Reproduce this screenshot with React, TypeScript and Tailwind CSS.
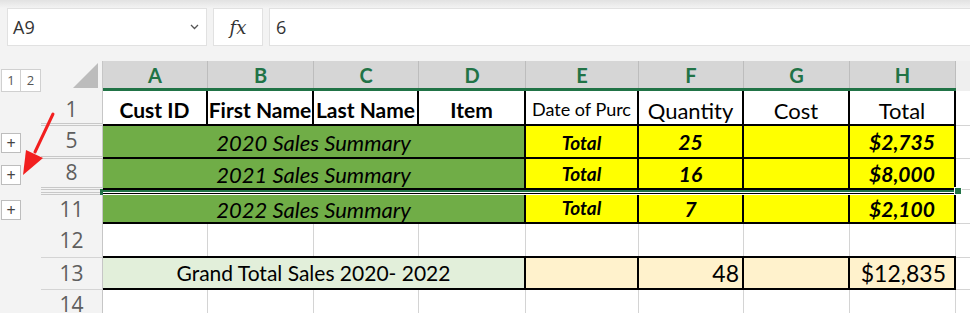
import React from 'react'

const cols = [
  { key: 'A', w: 'w-[105px]' },
  { key: 'B', w: 'w-[106px]' },
  { key: 'C', w: 'w-[105px]' },
  { key: 'D', w: 'w-[107px]' },
  { key: 'E', w: 'w-[113px]' },
  { key: 'F', w: 'w-[105px]' },
  { key: 'G', w: 'w-[106px]' },
  { key: 'H', w: 'w-[106px]' },
]

const cellFont = "font-['Lato','Liberation_Sans',sans-serif]"

function PlusBox() {
  return (
    <div className="w-[20px] h-[20px] bg-white border border-[#bdbdbd] flex items-center justify-center text-[16px] leading-none text-[#444]">
      +
    </div>
  )
}

// left outline gutter + row number
function RowHead({ num, h, plus, double, line = true, pt = '' }: { num?: string; h: string; plus?: boolean; double?: boolean; line?: boolean; pt?: string }) {
  return (
    <div className={`flex ${h} shrink-0`}>
      <div className="w-[41px] flex items-center pl-[1px]">{plus && <PlusBox />}</div>
      <div
        className={`w-[62px] flex items-center justify-center border-r border-[#c6c6c6] text-[21px] text-[#5e5e5e] font-['Open_Sans',sans-serif] ${pt} ${
          line ? (double ? 'border-b-[3px] border-double border-b-[#c8c8c8]' : 'border-b border-b-[#d4d4d4]') : ''
        }`}
      >
        {num}
      </div>
    </div>
  )
}

function SummaryRow({ h, num, year, qty, total }: { h: string; num: string; year: string; qty: string; total: string }) {
  return (
    <div className={`flex ${h} shrink-0`}>
      <RowHead num={num} h={h} plus double={num !== '11'} line={num !== '11'} />
      <div className={`flex ${cellFont} border-b-2 border-black`}>
        <div className="w-[423px] bg-[#70ad47] border-r-2 border-black flex items-center justify-center italic text-[22px] text-black pt-[1px]">
          {year} Sales Summary
        </div>
        <div className="w-[113px] bg-[#ffff00] border-r-2 border-black flex items-end justify-center pb-[0px] italic font-bold text-[19px]">
          Total
        </div>
        <div className="w-[105px] bg-[#ffff00] border-r-2 border-black flex items-center justify-center italic font-bold text-[21px]">
          {qty}
        </div>
        <div className="w-[106px] bg-[#ffff00] border-r-2 border-black" />
        <div className="w-[106px] bg-[#ffff00] border-r-2 border-black flex items-center justify-center italic font-bold text-[21px]">
          {total}
        </div>
      </div>
      <div className="flex-1 bg-white border-b border-[#d4d4d4]" />
    </div>
  )
}

function BlankRow({ h, num, bottom }: { h: string; num: string; bottom?: boolean }) {
  return (
    <div className={`flex ${h} shrink-0`}>
      <RowHead num={num} h={h} />
      <div className={`flex ${bottom ? 'border-b-2 border-black' : ''}`}>
        {cols.map((c) => (
          <div key={c.key} className={`${c.w} bg-white border-r border-[#d4d4d4]`} />
        ))}
      </div>
      <div className="flex-1 bg-white border-b border-[#d4d4d4]" />
    </div>
  )
}

export default function App() {
  return (
    <div className="relative w-[970px] h-[313px] overflow-hidden bg-[#f3f3f3] flex flex-col">
      {/* Formula bar */}
      <div className="h-[8px] shrink-0 bg-gradient-to-b from-[#e2e2e2] to-[#f3f3f3]" />
      <div className="flex h-[38px] shrink-0 pl-[7px] gap-[6px]">
        <div className="w-[200px] bg-white border border-[#e1e1e1] flex items-center justify-between pl-[5px] pr-[7px] font-['Open_Sans',sans-serif] text-[18px] text-[#333]">
          <span>A9</span>
          <svg width="9" height="6" viewBox="0 0 9 6" fill="none" stroke="#555" strokeWidth="1.3">
            <path d="M1 1l3.5 3.5L8 1" />
          </svg>
        </div>
        <div className="w-[50px] bg-white border border-[#e1e1e1] flex items-center justify-center font-['DejaVu_Serif','Liberation_Serif',serif] italic text-[18px] text-[#333]">
          fx
        </div>
        <div className="flex-1 bg-white border-y border-l border-[#e1e1e1] flex items-center pl-[6px] font-['Open_Sans',sans-serif] text-[18px] text-[#333]">
          6
        </div>
      </div>
      <div className="h-[15px] shrink-0" />

      {/* Column header */}
      <div className="flex h-[30px] shrink-0">
        <div className="w-[41px] flex items-start pt-[8px] pl-[1px]">
          <div className="flex border border-[#d0d0d0] bg-white text-[13px] text-[#555] font-['Open_Sans',sans-serif] leading-none">
            <span className="w-[19px] h-[21px] flex items-center justify-center border-r border-[#d0d0d0]">1</span>
            <span className="w-[19px] h-[21px] flex items-center justify-center">2</span>
          </div>
        </div>
        <div className="w-[62px] border-r border-[#c6c6c6] flex items-end justify-end pr-[4px] pb-[3px]">
          <svg width="25" height="25" viewBox="0 0 25 25">
            <path d="M25 0V25H0Z" fill="#bcbcbc" />
          </svg>
        </div>
        <div className="flex border-b-[3px] border-[#217346]">
          {cols.map((c) => (
            <div
              key={c.key}
              className={`${c.w} bg-[#d6d6d6] border-r border-[#bdbdbd] flex items-center justify-center text-[20px] font-bold text-[#217346] ${cellFont}`}
            >
              {c.key}
            </div>
          ))}
        </div>
        <div className="flex-1 bg-[#efefef]" />
      </div>

      {/* Row 1 */}
      <div className="flex h-[35px] shrink-0">
        <RowHead num="1" h="h-[35px]" double pt="pt-[5px]" />
        <div className={`flex border-b-2 border-black ${cellFont} text-black`}>
          {['Cust ID', 'First Name', 'Last Name', 'Item'].map((t, i) => (
            <div
              key={t}
              className={`${cols[i].w} bg-white border-r-2 border-black flex items-center justify-center pt-[5px] font-bold text-[21px] whitespace-nowrap overflow-hidden`}
            >
              {t}
            </div>
          ))}
          <div className="w-[113px] bg-white border-r-2 border-black flex items-end justify-center pb-[1px] text-[18px] whitespace-nowrap overflow-hidden">
            Date of Purc
          </div>
          {['Quantity', 'Cost', 'Total'].map((t, i) => (
            <div
              key={t}
              className={`${cols[i + 5].w} bg-white border-r-2 border-black flex items-center justify-center pt-[5px] text-[22px] whitespace-nowrap overflow-hidden`}
            >
              {t}
            </div>
          ))}
        </div>
        <div className="flex-1 bg-white border-b border-[#d4d4d4]" />
      </div>

      <SummaryRow h="h-[33px]" num="5" year="2020" qty="25" total="$2,735" />
      <SummaryRow h="h-[31px]" num="8" year="2021" qty="16" total="$8,000" />

      {/* hidden rows 9-10: selection line */}
      <div className="flex h-[5px] shrink-0">
        <div className="w-[41px]" />
        <div className="w-[62px] border-r border-[#c6c6c6] flex flex-col">
          <div className="h-[2px]" />
          <div className="h-[3px] border-y border-[#c8c8c8]" />
        </div>
        <div className="w-[853px] flex flex-col">
          <div className="h-[2px] bg-[#217346]" />
          <div className="h-[1px] bg-white" />
          <div className="h-[1px] bg-black" />
          <div className="h-[1px] bg-white" />
        </div>
        <div className="flex-1 bg-white" />
      </div>

      <SummaryRow h="h-[29px]" num="11" year="2022" qty="7" total="$2,100" />
      <BlankRow h="h-[34px]" num="12" bottom />

      {/* Row 13 */}
      <div className="flex h-[32px] shrink-0">
        <RowHead num="13" h="h-[32px]" />
        <div className={`flex border-b-2 border-black ${cellFont} text-[21px] text-black`}>
          <div className="w-[423px] bg-[#e2efda] border-r-2 border-black flex items-center justify-center">
            Grand Total Sales 2020- 2022
          </div>
          <div className="w-[113px] bg-[#fff2cc] border-r-2 border-black" />
          <div className="w-[105px] bg-[#fff2cc] border-r-2 border-black flex items-center justify-end pr-[3px] text-[23px]">48</div>
          <div className="w-[106px] bg-[#fff2cc] border-r-2 border-black" />
          <div className="w-[106px] bg-[#fff2cc] border-r-2 border-black flex items-center justify-end pr-[8px] text-[23px]">$12,835</div>
        </div>
        <div className="flex-1 bg-white border-b border-[#d4d4d4]" />
      </div>

      <BlankRow h="h-[30px]" num="14" />

      {/* selection anchor + fill handle */}
      <div className="absolute left-[100px] top-[189px] w-[3px] h-[6px] bg-[#217346]" />
      <div className="absolute left-[954px] top-[187px] w-[8px] h-[8px] bg-[#217346] border border-white" />

      {/* red annotation arrow */}
      <svg className="absolute left-0 top-[100px]" width="70" height="90" viewBox="0 0 70 90">
        <path d="M53 14L35 52" stroke="#f21f1f" strokeWidth="3" strokeLinecap="round" />
        <path d="M23 75L26 50L43 58Z" fill="#f21f1f" />
      </svg>
    </div>
  )
}
